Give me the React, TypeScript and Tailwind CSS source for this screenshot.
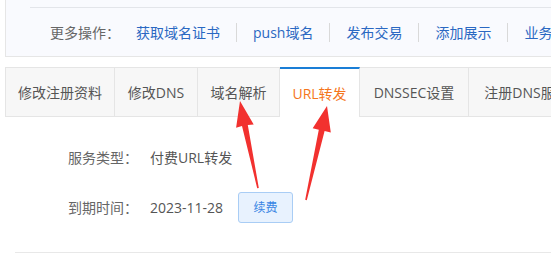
import React from "react";

const links = ["获取域名证书", "push域名", "发布交易", "添加展示", "业务管理"];

const tabs = [
  { label: "修改注册资料", w: "w-[110px]" },
  { label: "修改DNS", w: "w-[83px]" },
  { label: "域名解析", w: "w-[82px]" },
  { label: "URL转发", w: "w-[80px]", active: true },
  { label: "DNSSEC设置", w: "w-[109px]" },
  { label: "注册DNS服务器", w: "w-[130px]" },
];

function Arrows() {
  return (
    <svg
      className="absolute left-0 top-0 pointer-events-none"
      width="551"
      height="266"
      viewBox="0 0 551 266"
    >
      <polygon
        fill="#f2312f"
        points="240,101 253.7,124.5 247.8,124.9 258.8,188 257.2,188.2 242,126.1 236.1,127.8"
      />
      <polygon
        fill="#f2312f"
        points="327,106 330.8,132.6 324.6,131.1 306.8,200.2 305.2,199.8 318.8,129.7 312.7,128.2"
      />
    </svg>
  );
}

export default function App() {
  return (
    <div
      className="relative w-[551px] h-[266px] overflow-hidden bg-white pl-[5px]"
      style={{ fontFamily: '"Open Sans", "Noto Sans CJK SC", sans-serif' }}
    >
      {/* more actions box */}
      <div className="w-[700px] h-[57px] bg-[#f9fafe] border-l border-b border-[#e6e6e6] pt-[7px]">
        <div className="ml-[24px] h-[49px] border-t border-[#e3e5ea] flex items-center pl-[20px] text-[14px]">
          <span className="text-[#666] mr-[16px]">更多操作：</span>
          {links.map((l, i) => (
            <div key={l} className="flex items-center">
              {i > 0 && <span className="w-px h-[19px] bg-[#d9d9d9] mx-[16px]" />}
              <a className="text-[#2a68c2] whitespace-nowrap">{l}</a>
            </div>
          ))}
        </div>
      </div>

      {/* tabs */}
      <div className="mt-[10px] w-[700px] flex border-b border-[#e5e5e5] h-[50px]">
        {tabs.map((t, i) =>
          t.active ? (
            <div
              key={t.label}
              className={`${t.w} shrink-0 h-[50px] bg-white border-t-2 border-t-[#1a7ed6] border-r border-r-[#e5e5e5] flex items-center justify-center text-[14px] text-[#f5761c] -mb-px`}
            >
              {t.label}
            </div>
          ) : (
            <div
              key={t.label}
              className={`${t.w} shrink-0 h-[49px] bg-[#f7f7f7] border-t border-r border-[#e5e5e5] ${
                i === 0 ? "border-l" : ""
              } flex items-center justify-center text-[14px] text-[#555] whitespace-nowrap`}
            >
              {t.label}
            </div>
          )
        )}
      </div>

      {/* content */}
      <div className="pt-[30px] pl-[63px] text-[14px]">
        <div className="flex items-center h-[20px]">
          <span className="w-[82px] text-[#666]">服务类型：</span>
          <span className="text-[#555]">付费URL转发</span>
        </div>
        <div className="flex items-center h-[31px] mt-[25px]">
          <span className="w-[82px] text-[#666]">到期时间：</span>
          <span className="w-[78px] text-[#555] whitespace-nowrap">2023-11-28</span>
          <button className="ml-[10px] w-[55px] h-[31px] rounded-[3px] border border-[#a9cdf5] bg-[#e8f2fe] text-[#3a86e4] text-[12px]">
            续费
          </button>
        </div>
      </div>
      <div className="mt-[29px] ml-[10px] h-px bg-[#e8e8e8]" />

      <Arrows />
    </div>
  );
}
